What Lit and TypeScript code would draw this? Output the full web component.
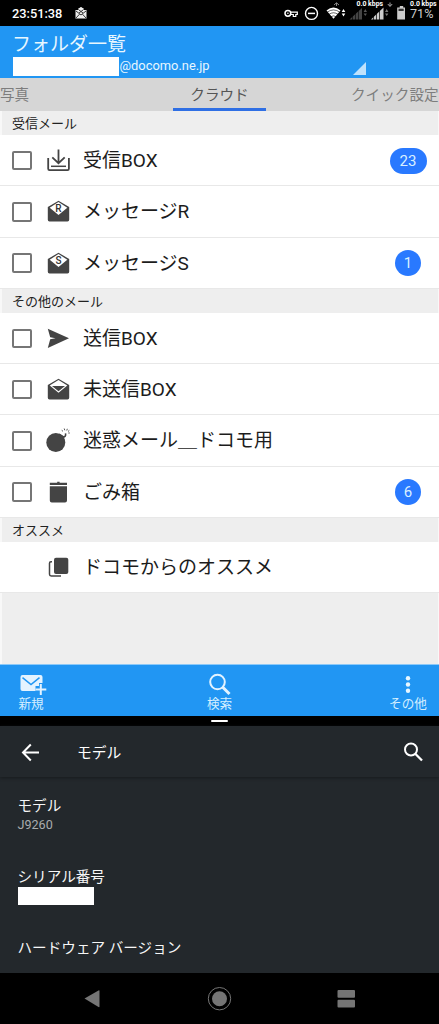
import { LitElement, html, svg, css, nothing } from "lit";
import { customElement, property } from "lit/decorators.js";

const letterMail = (letter: string) => svg`<path fill="#444" d="M12.500 1.700L23.200 8V20.800a1.700 1.700 0 0 1-1.700 1.700H3.500A1.700 1.700 0 0 1 1.800 20.800V8Z"/><path fill="#fff" d="M12.500 3L21.300 8.700L12.500 16L3.700 8.700Z"/><text x="12.500" y="12.700" text-anchor="middle" font-size="10" font-weight="500" fill="#333">${letter}</text>`;

const folderIcons: Record<string, unknown> = {
  inbox: svg`<g fill="none" stroke="#444" stroke-width="1.800"><path d="M2.200 10V20.800a1.300 1.300 0 0 0 1.300 1.300H21.600a1.300 1.300 0 0 0 1.300-1.300V10"/><path d="M12.500 1.500V14.500M6.300 9.300L12.500 15.200L18.700 9.300"/><path d="M5 18.300H20" stroke-width="1.500"/></g>`,
  mailR: letterMail("R"),
  mailS: letterMail("S"),
  sent: svg`<path fill="#444" d="M1.800 2.700L23 12.300L1.800 22L4.200 13.300L9.500 12.300L4.200 11.300Z"/>`,
  draft: svg`<path fill="#444" d="M12.500 1.700L23.200 8V20.800a1.700 1.700 0 0 1-1.700 1.700H3.500A1.700 1.700 0 0 1 1.800 20.800V8Z"/><path fill="#fff" d="M12.500 3L21.300 8.500L12.500 15.800L3.700 8.500Z"/><path fill="#444" d="M6 9H19L12.500 14.200Z"/>`,
  bomb: svg`<circle cx="9.800" cy="14.500" r="9.500" fill="#444"/><path fill="#444" d="M13.500 5.500L18 8.300L17.500 12L12 8Z"/><path d="M16.500 9.300Q20.300 9 19.500 5.300" stroke="#444" stroke-width="1.600" fill="none"/><path d="M17 3.300L15.700 2.300M18.800 2.300L18.200 .5M20.800 2.500L21.300 .8M22 3.500L23.300 2.400M22.300 5H23.800" stroke="#555" stroke-width="1"/>`,
  trash: svg`<path fill="#444" d="M3.800 6.300H21V20.500a2 2 0 0 1-2 2H5.800a2 2 0 0 1-2-2ZM3.800 2.700H11.200V1.700H13.600V2.700H21V4.900H3.800Z"/>`,
  copy: svg`<rect x="8" y="2.700" width="14.300" height="16.300" rx="2" fill="#444"/><path d="M6 6.700H5a1.500 1.500 0 0 0-1.500 1.500V19.300a1.700 1.700 0 0 0 1.700 1.700H15" fill="none" stroke="#444" stroke-width="1.500"/>`,
};

@customElement("folder-row")
class FolderRow extends LitElement {
  @property() icon = "";
  @property() label = "";
  @property() count = "";
  @property({ type: Boolean }) plain = false;

  static styles = css`
    :host { display: flex; align-items: center; height: 51.25px; box-sizing: border-box; padding: 1px 0 0 12px;
      background: #fff; border-bottom: 1px solid #e8e8e8; }
    .box { width: 19.500px; height: 19.500px; box-sizing: border-box; border: 2px solid #767676; border-radius: 2px; }
    .box.hidden { visibility: hidden; }
    .icon { width: 25px; height: 25px; margin-left: 14px; font-family: Roboto, sans-serif; }
    .label { margin: 1px 0 0 12.500px; font-size: 19px; line-height: 28px; color: #1c1c1c; white-space: nowrap; flex: 1; }
    .slot { width: 38px; margin-right: 12px; display: flex; justify-content: center; }
    .badge { min-width: 26px; height: 26px; line-height: 27px; border-radius: 13px; background: #2979ff;
      color: #d9f0ff; font-size: 15px; text-align: center; box-sizing: border-box; }
    .badge.wide { width: 37px; }
  `;

  render() {
    return html`
      <span class="box ${this.plain ? "hidden" : ""}"></span>
      <svg class="icon" viewBox="0 0 25 25">${folderIcons[this.icon]}</svg>
      <span class="label">${this.label}</span>
      <span class="slot">${this.count
        ? html`<span class="badge ${this.count.length > 1 ? "wide" : ""}">${this.count}</span>`
        : nothing}</span>`;
  }
}

@customElement("status-bar")
class StatusBar extends LitElement {
  static styles = css`
    :host { display: block; height: 26px; background: #000; color: #fff; position: relative; }
    .row { display: flex; align-items: center; height: 26px; padding-left: 12px; box-sizing: border-box; }
    .time { font-size: 12.800px; font-weight: 500; width: 51px; white-space: nowrap; }
    .mail { width: 12px; height: 12px; margin-left: 12px; }
    .icons { width: 129px; height: 26px; margin-left: auto; }
    .percent { width: 30px; font-size: 12.600px; line-height: 12px; color: #ccc; padding-left: 1px; box-sizing: border-box; margin-top: 2px; }
    .rate { position: absolute; top: 1px; font-size: 6.900px; line-height: 7px; font-weight: 700; white-space: nowrap; }
    .rate.up { left: 356.500px; }
    .rate.down { left: 410px; }
  `;
  render() {
    return html`
      <div class="row">
        <span class="time">23:51:38</span>
        <svg class="mail" viewBox="0 0 12 12">
          <path d="M3.500 1H8.500V3H11.500V11.500H.5V3H3.500Z" fill="#eee"/><circle cx="6" cy="1.500" r="1.500" fill="#eee"/>
          <path d="M1 4L6 8L11 4M1 11L4.500 7.200M11 11L7.500 7.200M4 3L8 6M8 3L4 6" stroke="#222" stroke-width=".9" fill="none"/>
        </svg>
        <svg class="icons" viewBox="280 0 129 26">
          <g fill="none" stroke="#fff" stroke-width="1.500">
            <circle cx="287.900" cy="13.300" r="2.900"/>
            <path d="M290.500 12.200H297.300V14.500H295.800V16.500H293.300V14.500H290.500" stroke-width="1.200"/>
            <circle cx="311.500" cy="13.400" r="6" stroke-width="1.400"/><path d="M308 13.400H315"/>
          </g>
          <circle cx="287.900" cy="13.300" r=".8" fill="#fff"/>
          <path d="M326.500 10.500Q333.500 4.500 340.500 10.500L333.500 18.700Z" fill="#fff"/>
          <path d="M327 12.300Q333.500 7.500 340 12.300M328.800 14.500Q333.500 11 338.200 14.500M331 16.700Q333.500 15 336 16.700" fill="none" stroke="#000" stroke-width=".6"/>
          <path d="M334 5L336.500 2.800L339 5M336.500 3V6" fill="none" stroke="#aaa" stroke-width=".8"/>
          <path d="M341.700 12L343.500 9L345.300 12ZM341.700 13.500H345.300L343.500 16.500Z" fill="#fff"/>
          <path d="M349.500 19.500L362 8V19.500Z" fill="#444"/>
          <path d="M352.500 8V20M355.500 8V20M358.500 8V20" stroke="#000" stroke-width=".6"/>
          <path d="M363.600 12L365.300 9L367 12ZM363.600 13.500H367L365.300 16Z" fill="#555"/>
          <path d="M371 19.500L383.500 7.500V19.500Z" fill="#ccc"/>
          <path d="M373.500 8V20M376.500 8V20M379.500 8V20" stroke="#000" stroke-width=".7"/>
          <path d="M385 12L386.700 9L388.400 12ZM385 13.500H388.400L386.700 16Z" fill="#777"/>
          <path d="M387.800 4L390 6.500L392.200 4M390 2.500V6" fill="none" stroke="#bbb" stroke-width=".9"/>
          <path d="M398.200 7.500H399.800V6H403.200V7.500H405V19.500H397.200V7.500Z" fill="#ccc"/><path d="M398.500 8.700H403.700V11H398.500Z" fill="#333"/>
        </svg>
        <span class="percent">71%</span>
      </div>
      <span class="rate up">0.0 kbps</span><span class="rate down">0.0 kbps</span>`;
  }
}

@customElement("app-root")
class AppRoot extends LitElement {
  static styles = css`
    :host { display: block; width: 439px; height: 1024px; overflow: hidden; background: #000;
      font-family: Roboto, "Noto Sans CJK JP", sans-serif; }
    .header { height: 51.500px; box-sizing: border-box; padding: 5px 0 0 12px; background: #2196f3; color: #e8f7ff; }
    .title { font-size: 19px; line-height: 28px; height: 26px; }
    .account { display: flex; align-items: center; }
    .mask { width: 105.500px; height: 19px; background: #fff; margin-left: 1px; }
    .address { font-size: 12.900px; line-height: 16px; margin: -2px 0 0 1px; }
    .spinner { width: 13px; height: 13px; margin: 4px 73px 0 auto; }
    .tabs { display: flex; justify-content: space-between; height: 33.500px; background: #d6d6d6; color: #7d7d7d;
      font-size: 14.600px; line-height: 34px; white-space: nowrap; }
    .tab.first, .tab.last { width: 88px; }
    .tab.active { width: 93px; box-sizing: border-box; border-bottom: 3.500px solid #2f6fe4; text-align: center; color: #555; }
    .section { height: 24px; box-sizing: border-box; border-left: 2px solid #f8f8f8; border-right: 1px solid #f8f8f8; padding-left: 10px;
      background: #eee; color: #222; font-size: 13px; line-height: 26px; }
    .rest { height: 71px; box-sizing: border-box; border-left: 2px solid #f8f8f8; border-right: 1px solid #f8f8f8; background: #eee; }
    .toolbar { height: 52px; box-sizing: border-box; display: flex; justify-content: space-between; background: #2196f3;
      color: #d5efff; border-top: 1px solid #8cc9f8; }
    .action { width: 62px; display: flex; flex-direction: column; align-items: center; padding-top: 7px; font-size: 12.600px; line-height: 15px; white-space: nowrap; }
    .action svg { width: 28px; height: 24px; }
    .action .compose { margin-left: 4px; }
    .divider { height: 10px; display: flex; justify-content: center; align-items: center; background: #000; }
    .grip { width: 17px; height: 2px; border-radius: 1px; background: #fff; }
    .appbar { height: 51px; box-sizing: border-box; display: flex; align-items: center; padding: 1px 16px 0 21px; background: #23282c;
      color: #fff; font-size: 14.800px; box-shadow: 0 1px 3px #171b1e; position: relative; }
    .appbar .back { width: 19px; height: 19px; }
    .appbar .name { margin: -1px 0 0 37px; flex: 1; }
    .appbar .search { width: 20px; height: 20px; margin-top: -1px; }
    .settings { height: 196px; box-sizing: border-box; padding: 18px 0 0 17.500px; background: #23282c; color: #f6f6f6; font-size: 14.600px; }
    .item { height: 71px; line-height: 22px; }
    .value { font-size: 12.600px; line-height: 16px; color: #a9acae; }
    .serial { width: 76px; height: 18px; background: #fff; margin: -1px 0 0 .5px; }
    .nav { height: 51px; display: block; background: #000; }
  `;

  render() {
    return html`
      <status-bar></status-bar>
      <div class="header">
        <div class="title">フォルダ一覧</div>
        <div class="account">
          <span class="mask"></span><span class="address">@docomo.ne.jp</span>
          <svg class="spinner" viewBox="0 0 13 13"><path d="M0 13L13 0V13Z" fill="#bfe2fc"/></svg>
        </div>
      </div>
      <div class="tabs">
        <span class="tab first">写真</span><span class="tab active">クラウド</span><span class="tab last">クイック設定</span>
      </div>
      <div class="section">受信メール</div>
      <folder-row icon="inbox" label="受信BOX" count="23"></folder-row>
      <folder-row icon="mailR" label="メッセージR"></folder-row>
      <folder-row icon="mailS" label="メッセージS" count="1"></folder-row>
      <div class="section">その他のメール</div>
      <folder-row icon="sent" label="送信BOX"></folder-row>
      <folder-row icon="draft" label="未送信BOX"></folder-row>
      <folder-row icon="bomb" label="迷惑メール＿ドコモ用"></folder-row>
      <folder-row icon="trash" label="ごみ箱" count="6"></folder-row>
      <div class="section">オススメ</div>
      <folder-row icon="copy" label="ドコモからのオススメ" plain></folder-row>
      <div class="rest"></div>
      <div class="toolbar">
        <div class="action">
          <svg class="compose" viewBox="0 0 28 24"><path d="M3 3H21.500a2 2 0 0 1 2 2V11H20V14H16.500V19H3.500a2 2 0 0 1-2-2V5a2 2 0 0 1 2-2Z" fill="#e3f3ff"/><path d="M3.500 5.700L12 12.500L20.500 5.700" fill="none" stroke="#2196f3" stroke-width="1.500"/><path d="M21.800 12V23M16.500 17.500H27.300" stroke="#e3f3ff" stroke-width="2"/></svg>新規
        </div>
        <div class="action">
          <svg viewBox="0 0 28 24"><circle cx="11.500" cy="10" r="7.300" fill="none" stroke="#e3f3ff" stroke-width="2"/><path d="M16.500 15L23.500 22" stroke="#e3f3ff" stroke-width="3"/></svg>検索
        </div>
        <div class="action">
          <svg viewBox="0 0 28 24"><g fill="#e8f7ff"><circle cx="14" cy="6.200" r="2.200"/><circle cx="14" cy="12.500" r="2.200"/><circle cx="14" cy="18.800" r="2.200"/></g></svg>その他
        </div>
      </div>
      <div class="divider"><span class="grip"></span></div>
      <div class="appbar">
        <svg class="back" viewBox="0 0 19 19"><path d="M9.800 1.500L2 9.500L9.800 17.500M2 9.500H18" fill="none" stroke="#fff" stroke-width="2"/></svg>
        <span class="name">モデル</span>
        <svg class="search" viewBox="0 0 20 20"><circle cx="8" cy="7.500" r="6" fill="none" stroke="#fff" stroke-width="2"/><path d="M12 11.500L19 18.500" stroke="#fff" stroke-width="2.300"/></svg>
      </div>
      <div class="settings">
        <div class="item">モデル<div class="value">J9260</div></div>
        <div class="item">シリアル番号<div class="serial"></div></div>
        <div class="item">ハードウェア バージョン</div>
      </div>
      <svg class="nav" width="439" height="51" viewBox="0 0 439 51">
        <g fill="#757575"><path d="M84.500 25.500L98.500 17.500Q99.500 17 99.500 18V33.500Q99.500 34.500 98.500 34Z"/>
        <circle cx="219.500" cy="25.700" r="7.500"/><circle cx="219.500" cy="25.700" r="11.200" fill="none" stroke="#757575" stroke-width="1"/>
        <rect x="337.500" y="17" width="17.500" height="7.700" rx="1"/><rect x="337.500" y="26.700" width="17.500" height="7.700" rx="1"/></g>
      </svg>`;
  }
}
